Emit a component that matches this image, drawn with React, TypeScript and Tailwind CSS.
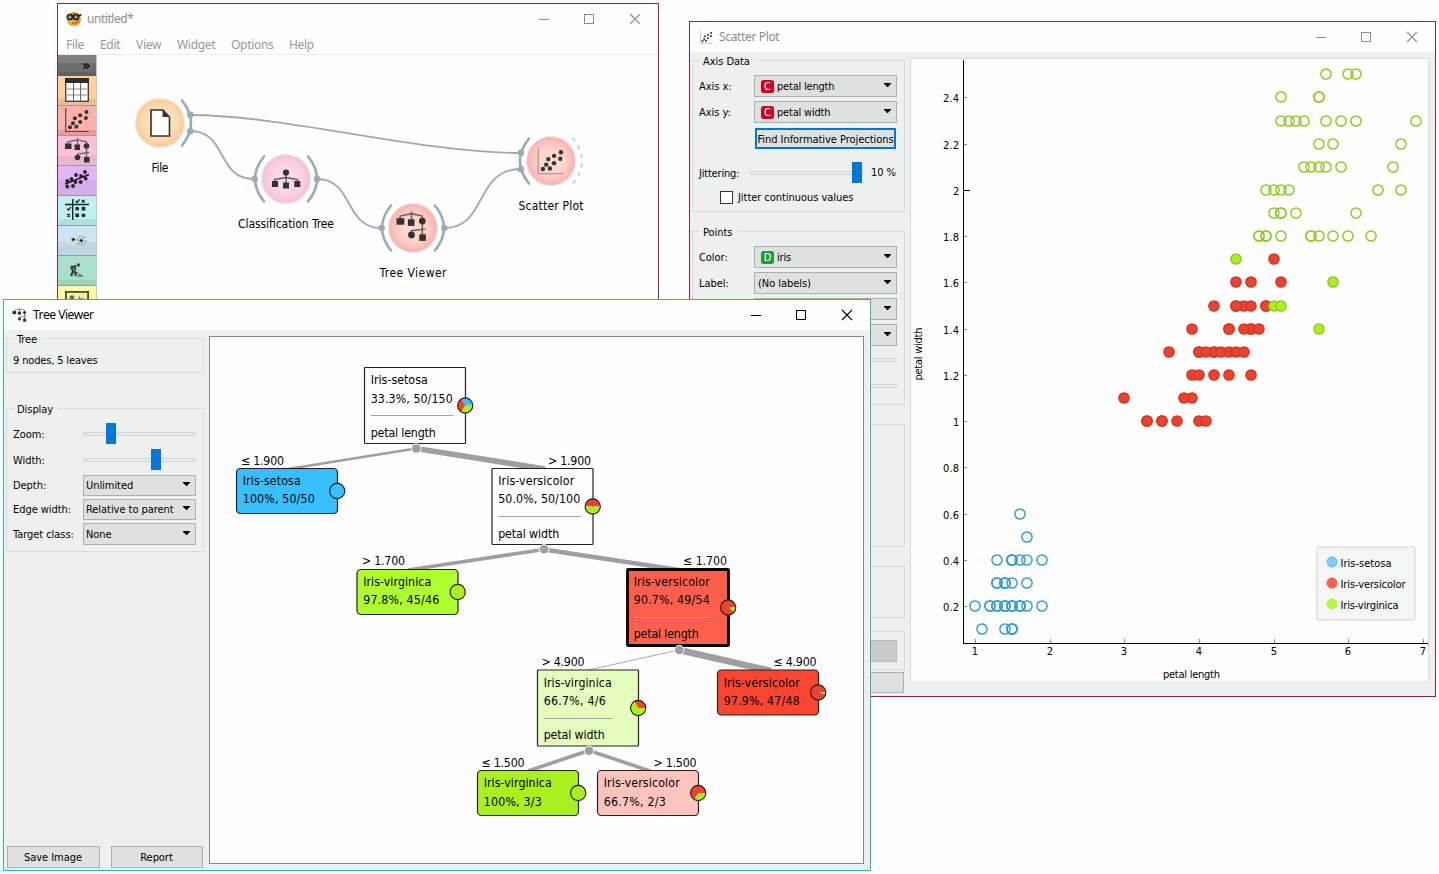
import React from "react";

const UI = "font-['DejaVu_Sans_Condensed','DejaVu_Sans',sans-serif] [font-stretch:condensed]";

/* ---------- shared controls ---------- */

function WindowButtons({ color }: { color: string }) {
  return (
    <svg width="110" height="14" viewBox="0 0 110 14" fill="none" stroke={color} strokeWidth="1" shapeRendering="crispEdges">
      <path d="M0 7.5H10" />
      <rect x="45.5" y="2.5" width="9" height="9" />
      <path d="M91 2L101 12M101 2L91 12" shapeRendering="auto" strokeWidth="1.1" />
    </svg>
  );
}

function Group({ title, className, children }: { title?: string; className: string; children?: React.ReactNode }) {
  return (
    <section className={`relative shrink-0 border border-[#d9dbda] ${className}`}>
      {title && (
        <h2 className="absolute -top-[7px] left-[7px] bg-[#eef0ef] pl-[3px] pr-[5px] pt-px text-[11px] leading-[14px]">{title}</h2>
      )}
      {children}
    </section>
  );
}

function Combo({ label, badge, className }: { label?: string; badge?: "C" | "D"; className: string }) {
  return (
    <div className={`flex shrink-0 items-center border border-[#adafae] bg-[#dfe1e0] ${className}`}>
      {badge && (
        <span
          className={`mr-[3px] ml-[3px] flex h-[13px] w-[13px] items-center justify-center rounded-[2.5px] text-[11px] leading-none text-white ${badge === "C" ? "bg-[#cc0526]" : "bg-[#1f9a3c]"}`}
        >
          {badge}
        </span>
      )}
      <span className={`grow whitespace-nowrap pt-[2px] ${badge ? "tracking-[-0.2px]" : ""}`}>{label}</span>
      <svg width="7" height="4" viewBox="0 0 7 4" className="mr-[5px] mb-[2px] shrink-0">
        <path d="M0 0H7V0.8L3.8 4H3.2L0 0.8Z" fill="#000" />
      </svg>
    </div>
  );
}

function Slider({ className, pad }: { className: string; pad: string }) {
  return (
    <div className={`flex h-[21px] shrink-0 items-center ${className}`}>
      <div className={`flex h-[4px] w-full items-center border border-[#d3d7d8] bg-[#e6eaea] ${pad}`}>
        <div className="h-[21px] w-[10px] shrink-0 bg-[#0078d7]" />
      </div>
    </div>
  );
}

/* ---------- icons ---------- */

function ScatterGlyph({ axis = "#4a4a48" }: { axis?: string }) {
  const dots = [[5, 19.3], [8, 15.3], [11.4, 18.8], [9.9, 10.2], [15.2, 14], [15.2, 7.2], [20.9, 9.9], [21.5, 3.9]];
  return (
    <g>
      <path d="M0.7 0V23.5H24" fill="none" stroke={axis} strokeWidth="1.2" />
      {dots.map(([x, y]) => (
        <circle key={`${x}-${y}`} cx={x} cy={y} r="2" fill="#333" />
      ))}
    </g>
  );
}

function TreeGlyph() {
  return (
    <g fill="#333">
      <path d="M3 6V3.8L12.5 1.8L21.5 3.8V20M12.5 0V8M12.5 21V16L24 14.5" fill="none" stroke="#6b6260" strokeWidth="1.3" />
      <rect x="0" y="5.5" width="6.5" height="5.5" />
      <rect x="9.5" y="6.5" width="5.5" height="5.5" />
      <circle cx="21.5" cy="8" r="2.8" />
      <circle cx="12.5" cy="19.5" r="2.8" />
      <rect x="19" y="19" width="5.5" height="5.5" />
    </g>
  );
}

function TableGlyph() {
  return (
    <g>
      <rect x="0.7" y="0.7" width="22.6" height="22.6" fill="#fff" stroke="#4a4440" strokeWidth="1.4" />
      <rect x="0" y="0" width="24" height="5" fill="#2e2d2c" />
      <path d="M1 11H23M1 17H23" stroke="#b5b2af" strokeWidth="1.6" />
      <path d="M8.5 5V23M15.5 5V23" stroke="#6a6663" strokeWidth="1" />
    </g>
  );
}

function RegressionGlyph() {
  const dots = [[2.3, 13], [2.3, 18.5], [8, 18], [6.5, 11], [11, 7], [10.5, 14], [15.7, 14], [16, 8], [20, 4], [20.7, 10.5]];
  return (
    <g>
      <path d="M0 16L24 6.5" stroke="#111" strokeWidth="1.5" />
      {dots.map(([x, y]) => (
        <circle key={`${x}-${y}`} cx={x} cy={y} r="1.9" fill="#222" />
      ))}
    </g>
  );
}

function ConfusionGlyph() {
  return (
    <g stroke="#1c2424" fill="none" strokeWidth="1.4">
      <path d="M0 6.5H24M7.7 1V22" />
      <path d="M10.500 3L12 4.500L14.500 1.500M17 2L19.500 4.500M19.500 2L17 4.500M2 10.500L3.500 12L6 8.800M2.300 16L4.800 18.500M4.800 16L2.300 18.500" strokeWidth="1.2" />
      <g fill="#1c2424" stroke="none">
        <circle cx="12.2" cy="10.7" r="1.9" />
        <rect x="16.700" y="8.900" width="3.600" height="3.600" />
        <rect x="10.400" y="15.500" width="3.600" height="3.600" />
        <circle cx="18.500" cy="17.300" r="1.900" />
      </g>
    </g>
  );
}

function ClusterGlyph() {
  return (
    <g>
      <circle cx="8" cy="11.500" r="4.500" fill="none" stroke="#dfe1e0" strokeWidth="3" strokeDasharray="3 1.5" />
      <circle cx="16.200" cy="12.500" r="4" fill="none" stroke="#a9adad" strokeWidth="2.200" strokeDasharray="2.4 1.6" />
      <path d="M6.500 11.500H10.100M8.300 9.700V13.300M14.400 12.500H18M16.200 10.700V14.300" stroke="#222" strokeWidth="1.300" />
    </g>
  );
}

function DiggerGlyph() {
  return (
    <g stroke="#3a403d" fill="none" strokeWidth="2">
      <circle cx="13.300" cy="7" r="1.700" fill="#3a403d" stroke="none" />
      <path d="M11 8L6.500 9L8 13.500L6 18M8 13L10.500 14.500V18M9.500 8.500L10.500 12" strokeWidth="2.200" />
      <path d="M5.500 10.500L14 16" strokeWidth="0.900" />
      <path d="M12 18.500L15 16L19 18.500Z" fill="#59605c" stroke="none" />
    </g>
  );
}

function ImageGlyph() {
  return (
    <g>
      <rect x="0.900" y="3.900" width="22.200" height="16" fill="#f6f2a0" stroke="#4d4a3a" strokeWidth="1.800" />
      <circle cx="7" cy="9.500" r="2.300" fill="#6f6b4c" />
      <path d="M13 12L14.500 8L16 11L18 10L20 12Z" fill="#6f6b4c" />
    </g>
  );
}

/* ---------- canvas window ---------- */

const MENUS: [string, string][] = [
  ["File", "w-[34px]"],
  ["Edit", "w-[36px]"],
  ["View", "w-[41px]"],
  ["Widget", "w-[54px]"],
  ["Options", "w-[58px]"],
  ["Help", "w-[40px]"],
];

const TOOLS: { bg: string; icon: React.ReactNode }[] = [
  { bg: "bg-[linear-gradient(#fdd09c_23px,#eabf8c_23px)]", icon: <TableGlyph /> },
  { bg: "bg-[linear-gradient(#fdb1ab_24px,#e79c97_24px)]", icon: <ScatterGlyph /> },
  { bg: "bg-[linear-gradient(#f9bfdb_20px,#ebb4cf_20px)]", icon: <TreeGlyph /> },
  { bg: "bg-[linear-gradient(#e2b5fb_14px,#d6abea_14px)]", icon: <RegressionGlyph /> },
  { bg: "bg-[linear-gradient(#c1efef_23px,#b0e0e0_23px)]", icon: <ConfusionGlyph /> },
  { bg: "bg-[linear-gradient(#cce4f3_16px,#c0d5e3_16px)]", icon: <ClusterGlyph /> },
  { bg: "bg-[linear-gradient(#a8e0cb_24px,#9cd3be_24px)]", icon: <DiggerGlyph /> },
  { bg: "bg-[#fdfba2]", icon: <ImageGlyph /> },
];

const WIRE = "#9aabb3";

function arc(cx: number, cy: number, side: 1 | -1) {
  return `M${cx + side * 22} ${cy - 22.5}Q${cx + side * 40} ${cy} ${cx + side * 22} ${cy + 22.5}`;
}

function WorkflowNode({ x, y, color, label, width, children }: { x: number; y: number; color: string; label: string; width: number; children: React.ReactNode }) {
  return (
    <g>
      <circle cx={x} cy={y} r="25.3" fill="#e4edf2" />
      <circle cx={x} cy={y} r="24" fill={`url(#${color})`} />
      {children}
      <text x={x - width / 2} y={y + 49} textLength={width} fontSize="12" fill="#000">
        {label}
      </text>
    </g>
  );
}

function Workflow() {
  return (
    <svg width="561" height="244" viewBox="97 55 561 244" className={UI}>
      <defs>
        <radialGradient id="orange"><stop offset="0.4" stopColor="#fee2c3" /><stop offset="0.75" stopColor="#fdd9b0" /><stop offset="1" stopColor="#fdcc90" /></radialGradient>
        <radialGradient id="pink"><stop offset="0.4" stopColor="#fbd8e8" /><stop offset="0.75" stopColor="#facde1" /><stop offset="1" stopColor="#f8bfd9" /></radialGradient>
        <radialGradient id="red"><stop offset="0.4" stopColor="#fed6d2" /><stop offset="0.75" stopColor="#fec6c1" /><stop offset="1" stopColor="#fdb1aa" /></radialGradient>
      </defs>
      <g fill="none" stroke={WIRE} strokeWidth="1.8">
        <path d="M190 115C285 115 420 153 521 153" />
        <path d="M190 131C228 131 216 179 254 179" />
        <path d="M317 179C354 179 344 228 381 228" />
        <path d="M444 228C488 228 474 169 521 169" />
      </g>
      <g fill="none" stroke={WIRE} strokeWidth="2.6" strokeLinecap="round">
        <path d={arc(160, 123, 1)} />
        <path d={arc(286, 179, -1)} />
        <path d={arc(286, 179, 1)} />
        <path d={arc(413, 228, -1)} />
        <path d={arc(413, 228, 1)} />
        <path d={arc(551, 161, -1)} />
        <path d={arc(551, 161, 1)} stroke="#d2d9dd" strokeDasharray="2 7.3" />
      </g>
      <g fill={WIRE}>
        {[[190.3, 114.7], [190.3, 131.2], [254.8, 179], [317, 179], [381.7, 228], [444.3, 228], [521, 152.8], [521, 169.3]].map(([x, y]) => (
          <circle key={`${x}-${y}`} cx={x} cy={y} r="3.2" />
        ))}
      </g>
      <WorkflowNode x={160} y={123} color="orange" label="File" width={17}>
        <path d="M151 110H163L169.5 117V136H151Z" fill="#fff" stroke="#333230" strokeWidth="1.6" />
        <path d="M162.5 110V117H169.5Z" fill="#333230" />
      </WorkflowNode>
      <WorkflowNode x={286} y={179} color="pink" label="Classification Tree" width={96}>
        <path d="M274.500 182V179.500L286 177.500L297.500 179.500V182M286 172V184" fill="none" stroke="#5b5457" strokeWidth="1.3" />
        <g fill="#333">
          <circle cx="286" cy="172.500" r="3.100" />
          <rect x="272" y="181" width="6" height="6" />
          <rect x="283" y="182.500" width="6" height="6" />
          <rect x="294.300" y="181" width="6" height="6" />
        </g>
      </WorkflowNode>
      <WorkflowNode x={413} y={228} color="red" label="Tree Viewer" width={67}>
        <g transform="translate(396.500 211.500) scale(1.200)"><TreeGlyph /></g>
      </WorkflowNode>
      <WorkflowNode x={551} y={161} color="red" label="Scatter Plot" width={65}>
        <g transform="translate(537.500 148) scale(1.090)"><ScatterGlyph axis="#a59d9c" /></g>
      </WorkflowNode>
    </svg>
  );
}

function CanvasWindow() {
  return (
    <div className="absolute left-[57px] top-[3px] flex h-[300px] w-[602px] flex-col border border-[#86264f] bg-[#fdfefd]">
      <header className="flex h-[30px] shrink-0 items-center pl-[8px] pr-[9px] font-['Noto_Sans',sans-serif] text-[12px] text-[#8c8c8c]">
        <svg width="16" height="16" viewBox="0 0 16 16">
          <circle cx="8" cy="8" r="7" fill="#f08a24" />
          <circle cx="6" cy="10" r="4.5" fill="#f9a83c" />
          <path d="M6 12Q9 13 11 11" fill="none" stroke="#a94d12" />
          <g fill="#8b9a9e" stroke="#1e2426" strokeWidth="1.5">
            <circle cx="3.8" cy="6" r="2.6" />
            <circle cx="10" cy="6" r="2.6" />
          </g>
          <path d="M12 5L15.5 3.5" stroke="#1e2426" strokeWidth="1.5" />
        </svg>
        <span className="ml-[5px] grow tracking-[-0.45px]">untitled*</span>
        <WindowButtons color="#8d8d8d" />
      </header>
      <nav className="flex h-[21px] shrink-0 items-center border-b border-[#ebebeb] pl-[8px] font-['Noto_Sans',sans-serif] text-[12px] tracking-[-0.3px] text-[#989898]">
        {MENUS.map(([name, width]) => (
          <span key={name} className={`${width} whitespace-nowrap pt-px`}>{name}</span>
        ))}
      </nav>
      <div className="flex min-h-0 grow overflow-hidden">
        <aside className="flex w-[39px] shrink-0 flex-col border-r border-[#c6c8c7]">
          <div className="flex h-[21px] shrink-0 items-center justify-end bg-[linear-gradient(#7f807f_8px,#6c6d6c_8px,#6c6d6c_17px,#5f605f_17px)] pr-[6px]">
            <svg width="7" height="6" viewBox="0 0 7 6" fill="none" stroke="#000" strokeWidth="1.3"><path d="M0.5 0.5L3 3L0.5 5.500M3.500 0.500L6 3L3.500 5.500" /></svg>
          </div>
          {TOOLS.map((tool, i) => (
            <div key={i} className={`flex h-[30px] shrink-0 items-start border-b border-[#999c9a] pl-[7px] pt-[2px] ${tool.bg}`}>
              <svg width="26" height="26" viewBox="0 0 26 26">{tool.icon}</svg>
            </div>
          ))}
        </aside>
        <Workflow />
      </div>
    </div>
  );
}

/* ---------- scatter plot window ---------- */

type Row = [number, number[]];

const SETOSA: Row[] = [
  [0.6, [1.6]],
  [0.5, [1.7]],
  [0.4, [1.3, 1.5, 1.5, 1.5, 1.6, 1.7, 1.9]],
  [0.3, [1.3, 1.3, 1.4, 1.4, 1.4, 1.5, 1.7]],
  [0.2, [1.0, 1.2, 1.2, 1.3, 1.3, 1.3, 1.4, 1.4, 1.4, 1.5, 1.5, 1.5, 1.6, 1.6, 1.6, 1.7, 1.9]],
  [0.1, [1.1, 1.4, 1.5, 1.5, 1.5]],
];

const VIRGINICA: Row[] = [
  [2.5, [5.7, 6.0, 6.1]],
  [2.4, [5.1, 5.6, 5.6]],
  [2.3, [5.1, 5.2, 5.3, 5.4, 5.7, 5.9, 6.1, 6.9]],
  [2.2, [5.6, 5.8, 6.7]],
  [2.1, [5.4, 5.5, 5.6, 5.7, 5.9, 6.6]],
  [2.0, [4.9, 5.0, 5.1, 5.2, 6.4, 6.7]],
  [1.9, [5.0, 5.1, 5.1, 5.3, 6.1]],
  [1.8, [4.8, 4.8, 4.9, 4.9, 5.1, 5.5, 5.5, 5.6, 5.8, 6.0, 6.3]],
];

const SELECTED_VERSICOLOR: Row[] = [
  [1.7, [5.0]],
  [1.6, [4.5, 4.7, 5.1]],
  [1.5, [4.2, 4.6, 4.7, 4.5, 4.5, 4.9, 4.9]],
  [1.4, [3.9, 4.4, 4.4, 4.7, 4.7, 4.6, 4.8]],
  [1.3, [3.6, 4.0, 4.0, 4.2, 4.2, 4.1, 4.4, 4.3, 4.5, 4.6]],
  [1.2, [3.9, 4.0, 4.2, 4.4, 4.7]],
  [1.1, [3.0, 3.9, 3.8]],
  [1.0, [3.3, 3.3, 3.5, 3.5, 3.7, 4.0, 4.1]],
];

const SELECTED_VIRGINICA: Row[] = [
  [1.7, [4.5]],
  [1.6, [5.8]],
  [1.5, [5.0, 5.1]],
  [1.4, [5.6]],
];

const px = (v: number) => Math.round(974.9 + (v - 1) * 74.7);
const py = (v: number) => Math.round(421.2 - (v - 1) * 231.3);

function Points({ rows, fill, stroke }: { rows: Row[]; fill: string; stroke: string }) {
  return (
    <g fill={fill} stroke={stroke} strokeWidth="1.5">
      {rows.flatMap(([y, xs]) => xs.map((x, i) => <circle key={`${y}-${i}`} cx={px(x)} cy={py(y)} r="5.1" />))}
    </g>
  );
}

const Y_TICKS = [2.4, 2.2, 2, 1.8, 1.6, 1.4, 1.2, 1, 0.8, 0.6, 0.4, 0.2];
const X_TICKS = [1, 2, 3, 4, 5, 6, 7];

const LEGEND: [string, string, string, number][] = [
  ["Iris-setosa", "#7fcdfb", "#4cc0fa", 51],
  ["Iris-versicolor", "#fe5f4d", "#fb5242", 65],
  ["Iris-virginica", "#b3f83f", "#aef23a", 58],
];

function Plot() {
  return (
    <svg width="517" height="622" viewBox="911 59 517 622" fontSize="11" className={UI}>
      <g shapeRendering="crispEdges" fill="none" stroke="#000">
        <path d="M963.5 60V643.5H1428" />
        {Y_TICKS.map((t) => (
          <path key={t} d={`M964 ${py(t) + 0.5}h${t === 2 ? 6 : 3}`} stroke={t === 2 ? "#000" : "#8b8b8b"} />
        ))}
        {X_TICKS.map((t) => (
          <path key={t} d={`M${px(t) + 0.5} 643v-4`} stroke="#8b8b8b" />
        ))}
      </g>
      {Y_TICKS.map((t) => {
        const text = String(t);
        const width = text.length === 1 ? 6 : 16;
        return (
          <text key={t} x={959 - width} y={py(t) + 4.5} textLength={text.length === 1 ? undefined : width}>{text}</text>
        );
      })}
      {X_TICKS.map((t) => (
        <text key={t} x={px(t)} y="655" textAnchor="middle">{t}</text>
      ))}
      <text x="1163" y="678" textLength="57">petal length</text>
      <text transform="translate(922 380.5) rotate(-90)" textLength="53">petal width</text>
      <Points rows={SETOSA} fill="none" stroke="#3a9ed2" />
      <Points rows={VIRGINICA} fill="none" stroke="#91cb2b" />
      <Points rows={SELECTED_VERSICOLOR} fill="#ee422e" stroke="#cd3a2a" />
      <Points rows={SELECTED_VIRGINICA} fill="#aaf01f" stroke="#91cb22" />
      <rect x="1317" y="547" width="98" height="73" rx="2" fill="#f4f6f5" stroke="#dddfde" strokeWidth="1.5" />
      {LEGEND.map(([name, fill, stroke, width], i) => (
        <g key={name}>
          <circle cx="1332" cy={562 + i * 21} r="5" fill={fill} stroke={stroke} />
          <text x="1340.5" y={567 + i * 21} textLength={width}>{name}</text>
        </g>
      ))}
    </svg>
  );
}

function Field({ label, children, className }: { label: string; children: React.ReactNode; className: string }) {
  return (
    <div className={`flex shrink-0 items-center ${className}`}>
      <span className="grow whitespace-nowrap pt-[2px]">{label}</span>
      {children}
    </div>
  );
}

function ScatterWindow() {
  return (
    <div className="absolute left-[689px] top-[21px] flex h-[676px] w-[747px] flex-col border border-[#86264f] bg-[#eef0ef]">
      <header className="flex h-[30px] shrink-0 items-center bg-[#fdfefd] pl-[10px] pr-[9px] font-['Noto_Sans',sans-serif] text-[12px] text-[#8c8c8c]">
        <svg width="13" height="13" viewBox="0 0 25 25"><ScatterGlyph axis="#999" /></svg>
        <span className="ml-[6px] grow tracking-[-0.35px]">Scatter Plot</span>
        <WindowButtons color="#8d8d8d" />
      </header>
      <div className="flex min-h-0 grow">
        <div className="flex w-[220px] shrink-0 flex-col pl-[2px] pr-[5px] pt-[8px] text-[11px] leading-[14px] tracking-[-0.05px]">
          <Group title="Axis Data" className="flex h-[152px] flex-col pl-[6px] pr-[7px] pt-[14px]">
            <Field label="Axis x:" className="h-[22px]">
              <Combo badge="C" label="petal length" className="h-[22px] w-[143px] pl-[3px]" />
            </Field>
            <Field label="Axis y:" className="mt-[4px] h-[22px]">
              <Combo badge="C" label="petal width" className="h-[22px] w-[143px] pl-[3px]" />
            </Field>
            <button className="mt-[5px] mr-px flex h-[21px] w-[141px] items-center justify-center self-end whitespace-nowrap border-2 border-[#0078d7] bg-[#dfe1e0] pt-[2px]">Find Informative Projections</button>
            <div className="mt-[13px] flex items-center">
              <span className="w-[51px] pt-[3px] tracking-[-0.2px]">Jittering:</span>
              <Slider className="w-[113px]" pad="pl-[101px]" />
              <span className="ml-[8px] whitespace-nowrap pt-px">10 %</span>
            </div>
            <label className="mt-[7px] ml-[21px] flex items-center">
              <span className="mr-[5px] h-[13px] w-[13px] border border-[#333] bg-white" />
              <span className="pt-px">Jitter continuous values</span>
            </label>
          </Group>
          <Group title="Points" className="mt-[19px] flex h-[174px] flex-col pl-[6px] pr-[7px] pt-[14px]">
            <Field label="Color:" className="h-[22px]">
              <Combo badge="D" label="iris" className="h-[22px] w-[143px] pl-[3px]" />
            </Field>
            <Field label="Label:" className="mt-[4px] h-[22px]">
              <Combo label="(No labels)" className="h-[22px] w-[143px] pl-[3px]" />
            </Field>
            <Combo className="mt-[4px] h-[22px] w-[143px] self-end" />
            <Combo className="mt-[4px] h-[22px] w-[143px] self-end" />
            <div className="mt-[12px] h-[4px] w-[143px] self-end border border-[#d3d7d8] bg-[#e6eaea]" />
            <div className="mt-[22px] h-[4px] w-[143px] self-end border border-[#d3d7d8] bg-[#e6eaea]" />
          </Group>
          <Group className="mt-[19px] h-[123px]" />
          <Group className="mt-[19px] h-[52px]" />
          <Group className="mt-[13px] flex h-[39px] flex-col items-end pt-[8px] pr-[7px]">
            <div className="h-[22px] w-[143px] border border-[#bbbdbc] bg-[#c9cbca]" />
          </Group>
          <div className="mt-[2px] mr-px h-[21px] shrink-0 border border-[#adafae] bg-[#dfe1e0]" />
        </div>
        <div className="mt-[6px] h-[623px] w-[519px] border border-b-0 border-[#d6d8d7] bg-[#fdfefd]">
          <Plot />
        </div>
      </div>
    </div>
  );
}

/* ---------- tree viewer window ---------- */

const BLUE = "#38bffe";
const RED = "#ee4330";
const LIME = "#aaf01f";

type Slice = [string, number, number];

function Pie({ x, y, slices }: { x: number; y: number; slices: Slice[] }) {
  const r = 7.6;
  const at = (turn: number) => {
    const a = turn * Math.PI * 2;
    return `${x + r * Math.cos(a)} ${y - r * Math.sin(a)}`;
  };
  return (
    <g>
      {slices.map(([color, from, to]) =>
        to - from >= 1 ? (
          <circle key={color} cx={x} cy={y} r={r} fill={color} />
        ) : (
          <path key={color} d={`M${x} ${y}L${at(from)}A${r} ${r} 0 ${to - from > 0.5 ? 1 : 0} 0 ${at(to)}Z`} fill={color} />
        ),
      )}
      <circle cx={x} cy={y} r={r} fill="none" stroke="#1d1d1d" strokeWidth="1.1" />
    </g>
  );
}

interface TreeNode {
  x: number;
  y: number;
  fill: string;
  name: [string, number];
  stats: [string, number];
  statsY: number;
  split?: [string, number];
  splitY?: number;
  selected?: boolean;
  slices: Slice[];
}

const NODES: TreeNode[] = [
  { x: 364.5, y: 367.5, fill: "#fdfefd", name: ["Iris-setosa", 57], stats: ["33.3%, 50/150", 82], statsY: 35, split: ["petal length", 65], splitY: 69.5, slices: [[BLUE, 0, 0.333], [RED, 0.333, 0.667], [LIME, 0.667, 0.999]] },
  { x: 236.5, y: 468.5, fill: BLUE, name: ["Iris-setosa", 58], stats: ["100%, 50/50", 72], statsY: 34.2, slices: [[BLUE, 0, 1]] },
  { x: 492, y: 468.5, fill: "#fdfefd", name: ["Iris-versicolor", 76], stats: ["50.0%, 50/100", 82], statsY: 34.2, split: ["petal width", 61], splitY: 69.5, slices: [[RED, 0, 0.5], [LIME, 0.5, 0.9999]] },
  { x: 357, y: 569.5, fill: "#affe2e", name: ["Iris-virginica", 68], stats: ["97.8%, 45/46", 76], statsY: 34.2, slices: [[LIME, 0, 1]] },
  { x: 627.5, y: 569.5, fill: "#fe5f4c", name: ["Iris-versicolor", 76], stats: ["90.7%, 49/54", 76], statsY: 34.2, split: ["petal length", 65], splitY: 68.5, selected: true, slices: [[RED, 0, 0.907], [LIME, 0.907, 0.999]] },
  { x: 537.5, y: 670, fill: "#e5febd", name: ["Iris-virginica", 68], stats: ["66.7%, 4/6", 62], statsY: 34.8, split: ["petal width", 61], splitY: 68.5, slices: [[RED, 0, 0.333], [LIME, 0.333, 0.999]] },
  { x: 717.5, y: 670, fill: "#fb452f", name: ["Iris-versicolor", 76], stats: ["97.9%, 47/48", 76], statsY: 34.8, slices: [[RED, 0, 0.979], [LIME, 0.965, 0.999]] },
  { x: 477.5, y: 770.5, fill: LIME, name: ["Iris-virginica", 68], stats: ["100%, 3/3", 58], statsY: 35, slices: [[LIME, 0, 1]] },
  { x: 597.5, y: 770.5, fill: "#fdc4be", name: ["Iris-versicolor", 76], stats: ["66.7%, 2/3", 62], statsY: 35, slices: [[RED, 0, 0.667], [LIME, 0.667, 0.999]] },
];

const EDGES: [number, number, number, number, number][] = [
  [416, 448.5, 288, 469, 2.6],
  [416, 448.5, 545, 469, 5.6],
  [544, 549.5, 408, 570, 3.6],
  [544, 549.5, 679, 570, 4.4],
  [679, 650, 588, 670, 0.9],
  [679, 650, 771, 671, 6.6],
  [589, 750.5, 528, 771, 3.6],
  [589, 750.5, 650, 771, 3.6],
];

const CONDITIONS: [string, number, number, number][] = [
  ["≤ 1.900", 241, 465, 43],
  ["> 1.900", 548, 465, 43],
  ["> 1.700", 362, 565, 43],
  ["≤ 1.700", 683, 565, 44],
  ["> 4.900", 541.5, 666, 43],
  ["≤ 4.900", 773.5, 666, 43],
  ["≤ 1.500", 481.5, 767, 43],
  ["> 1.500", 653.5, 767, 43],
];

function TreeDiagram() {
  return (
    <svg width="653" height="526" viewBox="210 337 653 526" fontSize="12.3" className={UI}>
      {EDGES.map(([x1, y1, x2, y2, w]) => (
        <path key={`${x1}-${x2}`} d={`M${x1} ${y1}L${x2} ${y2}`} stroke="#a09ea3" strokeWidth={w} />
      ))}
      {NODES.map((n) => {
        const height = n.split ? 76 : 45;
        return (
          <g key={`${n.x}-${n.y}`}>
            <rect x={n.x} y={n.y} width="101" height={height} rx={n.split ? 0.8 : 4} fill={n.fill} stroke={n.selected ? "#000" : "#222"} strokeWidth={n.selected ? 2.8 : 1.2} />
            <text x={n.x + 6.2} y={n.y + 16.5} textLength={n.name[1]}>{n.name[0]}</text>
            <text x={n.x + 6.2} y={n.y + n.statsY} textLength={n.stats[1]}>{n.stats[0]}</text>
            {n.split && (
              <>
                <path d={`M${n.x + 6.5} ${Math.floor(n.y + 48) + 0.5}h${Math.max(n.stats[1], n.name[1]) + 0.5}`} stroke="#a3a1a5" />
                <text x={n.x + 6.2} y={n.y + (n.splitY ?? 69)} textLength={n.split[1]}>{n.split[0]}</text>
              </>
            )}
            <Pie x={n.x + 100.7} y={n.y + (n.split ? 38 : 22.5)} slices={n.slices} />
          </g>
        );
      })}
      {[[416.3, 448.5], [544, 549.3], [679.3, 650], [589, 750.7]].map(([x, y]) => (
        <circle key={x} cx={x} cy={y} r="4.8" fill="#a09ea3" stroke="#fdfefd" strokeWidth="1" />
      ))}
      {CONDITIONS.map(([text, x, y, width]) => (
        <text key={`${x}-${y}`} x={x} y={y} textLength={width}>{text}</text>
      ))}
    </svg>
  );
}

function TreeWindow() {
  return (
    <div className="absolute left-[3px] top-[299px] flex h-[572px] w-[868px] flex-col border border-[#2fb4bd] bg-[#eef0ef]">
      <header className="flex h-[30px] shrink-0 items-center bg-[#fdfefd] pl-[8px] pr-[9px] font-['Noto_Sans',sans-serif] text-[12px] text-black">
        <svg width="15" height="14" viewBox="0 0 25 25"><TreeGlyph /></svg>
        <span className="ml-[6px] grow tracking-[-0.45px]">Tree Viewer</span>
        <WindowButtons color="#000" />
      </header>
      <div className="flex min-h-0 grow">
        <div className="flex w-[205px] shrink-0 flex-col pl-[2px] pr-[5px] pt-[8px] text-[11px] leading-[14px] tracking-[-0.05px]">
          <Group title="Tree" className="h-[35px] pl-[6px] pt-[15px] tracking-[-0.15px]">9 nodes, 5 leaves</Group>
          <Group title="Display" className="mt-[35px] flex h-[144px] flex-col pl-[6px] pr-[7px] pt-[14px]">
            <Field label="Zoom:" className="h-[21px]"><Slider className="w-[113px]" pad="pl-[22px]" /></Field>
            <Field label="Width:" className="mt-[5px] h-[21px]"><Slider className="w-[113px]" pad="pl-[67px]" /></Field>
            <Field label="Depth:" className="mt-[5px] h-[20px]"><Combo label="Unlimited" className="h-[21px] w-[113px] pl-[2px]" /></Field>
            <Field label="Edge width:" className="mt-[4px] h-[20px]"><Combo label="Relative to parent" className="h-[21px] w-[113px] pl-[2px]" /></Field>
            <Field label="Target class:" className="mt-[4px] h-[22px]"><Combo label="None" className="h-[22px] w-[113px] pl-[2px]" /></Field>
          </Group>
          <div className="mt-auto mb-[2px] ml-px flex gap-[11px]">
            <button className="flex h-[22px] w-[93px] items-center justify-center border border-[#adafae] bg-[#dfe1e0] pr-px pt-[2px]">Save Image</button>
            <button className="flex h-[22px] w-[92px] items-center justify-center border border-[#adafae] bg-[#dfe1e0] pr-px pt-[2px]">Report</button>
          </div>
        </div>
        <div className="mt-[6px] h-[528px] w-[655px] border border-[#7f868c] bg-[#fdfefd]">
          <TreeDiagram />
        </div>
      </div>
    </div>
  );
}

export default function App() {
  return (
    <main className={`relative h-[874px] w-[1439px] overflow-hidden bg-[#fdfefd] text-black ${UI}`}>
      <CanvasWindow />
      <ScatterWindow />
      <TreeWindow />
    </main>
  );
}
